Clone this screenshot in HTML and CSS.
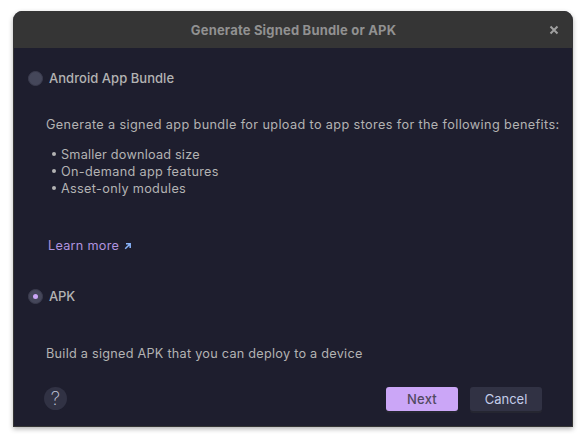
FILE: index.html
```html
<!DOCTYPE html>
<html lang="en">
<head>
<meta charset="utf-8">
<title>Generate Signed Bundle or APK</title>
<link rel="stylesheet" href="styles.css">
</head>
<body>
<main class="dialog">
  <header class="titlebar">
    <h1 class="title">Generate Signed Bundle or APK</h1>
    <button class="close" aria-label="Close"><svg width="10" height="10" viewBox="0 0 10 10"><path d="M1.5 1.5 8.5 8.5M8.5 1.5 1.5 8.5"/></svg></button>
  </header>
  <div class="content">
    <label class="option"><span class="radio"></span><span class="bundle-label">Android App Bundle</span></label>
    <section class="bundle">
      <p class="intro">Generate a signed app bundle for upload to app stores for the following benefits:</p>
      <ul class="benefits">
        <li><span class="smaller">Smaller download size</span></li>
        <li><span>On-demand app features</span></li>
        <li><span>Asset-only modules</span></li>
      </ul>
      <a class="learn"><span>Learn more</span><svg width="8" height="8" viewBox="0 0 8 8"><path d="M2 1.8H6.2V6M5.8 2.2 1.2 6.8"/></svg></a>
    </section>
    <label class="option"><span class="radio selected"></span><span class="apk-label">APK</span></label>
    <p class="apk-text">Build a signed APK that you can deploy to a device</p>
    <footer class="footer">
      <button class="help" aria-label="Help">?</button>
      <button class="button primary">Next</button>
      <button class="button">Cancel</button>
    </footer>
  </div>
</main>
</body>
</html>
```

FILE: styles.css
```css
* { box-sizing: border-box; }
body {
  margin: 0;
  padding: 11px 13px 16px;
  background: #fff;
  font: 13px/17px Inter, "Liberation Sans", sans-serif;
  color: #b3b3b3;
  white-space: nowrap;
}
h1, p, ul { margin: 0; padding: 0; }
button { border: 0; padding: 0; font: inherit; }
.dialog {
  width: 560px;
  height: 416px;
  border-radius: 9px 9px 0 0;
  background: #1e1e2e;
  border: 1px solid #353535;
  border-top: 0;
  overflow: hidden;
  box-shadow: 0 2px 5px rgba(0, 0, 0, .3);
}
.titlebar {
  display: grid;
  grid-template-columns: 32px 1fr 32px;
  align-items: center;
  height: 37px;
  background: #353535;
  color: #919191;
}
.title {
  grid-column: 2;
  padding: 1px 0 0 1px;
  text-align: center;
  font-size: 13px;
  line-height: 17px;
  font-weight: 700;
  letter-spacing: .19px;
}
.close { display: flex; background: none; padding: 1px 0 0 9px; }
.close path { stroke: #a0a0a0; stroke-width: 2; }
svg { display: block; fill: none; }
.content { padding: 22px 12px 0 14px; }
.option {
  display: flex;
  align-items: center;
  gap: 6px;
  height: 17px;
  font-weight: 500;
}
.bundle-label { letter-spacing: .04px; }
.apk-label { letter-spacing: -.2px; }
.radio {
  display: flex;
  align-items: center;
  justify-content: center;
  width: 15px;
  height: 15px;
  border-radius: 50%;
  background: #45475a;
  border: 1px solid #3b3c4e;
}
.selected::after { content: ""; width: 5px; height: 5px; border-radius: 50%; background: #cba6f7; }
.bundle { padding: 29px 0 0 18px; height: 201px; }
.intro, .benefits, .learn, .apk-text { font-size: 12.7px; letter-spacing: .37px; }
.benefits { list-style: none; margin-top: 13px; letter-spacing: .32px; }
.benefits li { display: flex; align-items: center; gap: 5px; padding-left: 6px; }
.benefits li::before { content: ""; width: 4px; height: 4px; margin-bottom: 1px; border-radius: 50%; background: #b3b3b3; }
.smaller { letter-spacing: .2px; }
.learn { display: flex; align-items: center; gap: 5px; margin: 40px 0 0 2px; color: #b093df; letter-spacing: .26px; }
.learn path { stroke: #89b4fa; stroke-width: 1.5; }
.apk-text { padding: 40px 0 0 18px; letter-spacing: .25px; }
.footer { display: flex; align-items: flex-start; gap: 12px; margin-top: 25px; padding: 0 18px 0 16px; }
.help {
  width: 23px;
  height: 23px;
  margin-right: auto;
  border-radius: 50%;
  background: #313244;
  color: #c3c8dc;
  font-size: 19px;
  font-weight: 200;
  line-height: 22px;
}
.button {
  width: 72px;
  height: 24px;
  border-radius: 3px;
  background: #313244;
  color: #c3cce9;
  box-shadow: 0 2px #252631;
}
.primary { background: #cba6f7; color: #514960; font-weight: 500; letter-spacing: .2px; }
```
